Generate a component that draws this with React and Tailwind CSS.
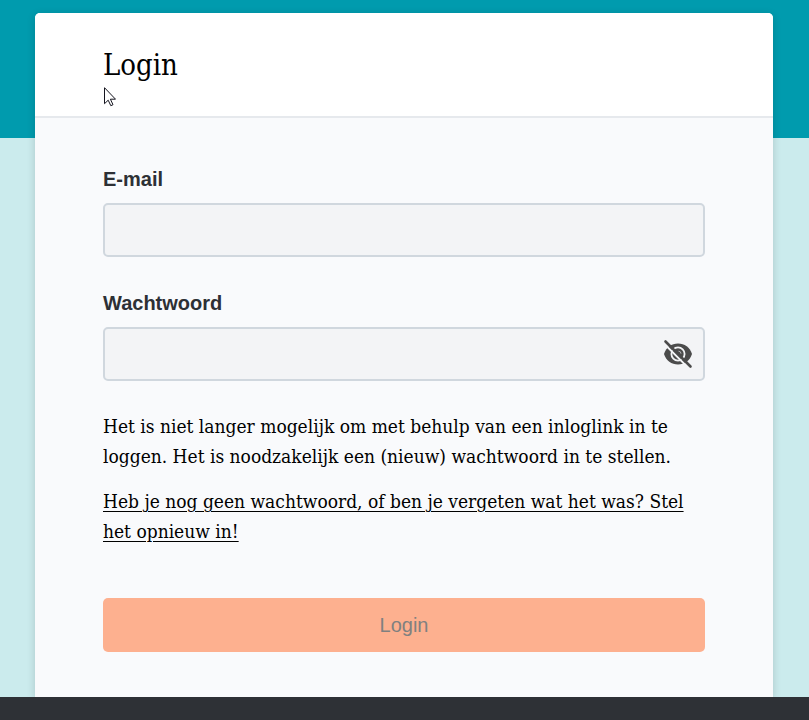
import { useState } from "react";

const EyeIcon = ({ crossed }) => (
  <svg viewBox="0 0 32 32" className="size-8" aria-hidden="true">
    <path
      fill="currentColor"
      d="M2 16C4 9.5 9.5 5.5 16 5.5S28 9.5 30 16C28 22.5 22.5 26.5 16 26.5S4 22.5 2 16z"
    />
    <circle cx="16" cy="16" r="6.6" fill="none" stroke="#f3f4f6" strokeWidth="1.8" />
    <path
      d="M16.500 13.200a2.500 2.500 0 0 1 2.500 2.500"
      fill="none"
      stroke="#f3f4f6"
      strokeWidth="0.6"
    />
    {crossed && (
      <>
        <path d="M1.500 5l25 25" stroke="#f3f4f6" strokeWidth="2" />
        <path
          d="M3.500 3.500l25 25"
          stroke="currentColor"
          strokeWidth="2.600"
          strokeLinecap="round"
        />
      </>
    )}
  </svg>
);

const Field = ({ id, label, type, value, onChange, children }) => (
  <div>
    <label
      htmlFor={id}
      className="block mb-3 leading-6 text-xl font-bold text-[#2d3035] font-['Liberation_Sans',sans-serif]"
    >
      {label}
    </label>
    <div className="relative">
      <input
        id={id}
        type={type}
        value={value}
        onChange={onChange}
        className="block w-full h-[54px] px-4 rounded-[5px] border-2 border-[#d0d7de] bg-[#f3f4f6] text-xl focus:outline-none focus:border-[#009bae]"
      />
      {children}
    </div>
  </div>
);

const App = () => {
  const [email, setEmail] = useState("");
  const [password, setPassword] = useState("");
  const [visible, setVisible] = useState(false);

  return (
    <div className="min-h-screen flex flex-col bg-[linear-gradient(#009bae_138px,#cbebed_138px)] font-['DejaVu_Serif_Condensed','DejaVu_Serif',serif] text-black">
      <main className="pt-[13px] pl-[35px] pr-9 overflow-hidden">
        <div className="rounded-t-[5px] bg-[#f9fafc] shadow-[0_2px_8px_rgba(0,0,0,0.16)]">
          <header className="relative px-[68px] pt-8 pb-[31px] rounded-t-[5px] bg-white border-b-2 border-[#e6e9ed]">
            <h1 className="text-[29px] leading-10">Login</h1>
            {/* Mouse Pointer */}
            <svg
              className="absolute left-[69px] top-[74px] w-3 h-5"
              viewBox="0 0 12 20"
              fill="white"
              stroke="#14141e"
              aria-hidden="true"
            >
              <path d="M.5 .7v16l3.7-3.5 2.6 5.5 2.2-1-2.6-5.5h5.1z" />
            </svg>
          </header>
          <form
            className="px-[68px] pt-[49px] pb-[45px]"
            onSubmit={(e) => e.preventDefault()}
          >
            <div className="flex flex-col gap-[34px] mb-[30px]">
              <Field
                id="email"
                label="E-mail"
                type="email"
                value={email}
                onChange={(e) => setEmail(e.target.value)}
              />
              <Field
                id="password"
                label="Wachtwoord"
                type={visible ? "text" : "password"}
                value={password}
                onChange={(e) => setPassword(e.target.value)}
              >
                <button
                  type="button"
                  aria-label="Toon wachtwoord"
                  onClick={() => setVisible(!visible)}
                  className="absolute right-[11px] top-[11px] text-[#4b4b4b]"
                >
                  <EyeIcon crossed={!visible} />
                </button>
              </Field>
            </div>
            <p className="mb-[15px] text-[19px] leading-[30px]">
              Het is niet langer mogelijk om met behulp van een inloglink in te
              loggen. Het is noodzakelijk een (nieuw) wachtwoord in te stellen.
            </p>
            <p className="mb-13 text-[19px] leading-[30px]">
              <a href="#wachtwoord" className="underline underline-offset-3 decoration-1">
                Heb je nog geen wachtwoord, of ben je vergeten wat het was? Stel
                het opnieuw in!
              </a>
            </p>
            <button
              type="submit"
              disabled={!email || !password}
              className="block w-full h-[54px] rounded-[5px] bg-[#fdb08f] text-xl text-[#808080] font-['Liberation_Sans',sans-serif]"
            >
              Login
            </button>
          </form>
        </div>
      </main>
      <footer className="grow bg-[#2e3136]"></footer>
    </div>
  );
};

export default App;
